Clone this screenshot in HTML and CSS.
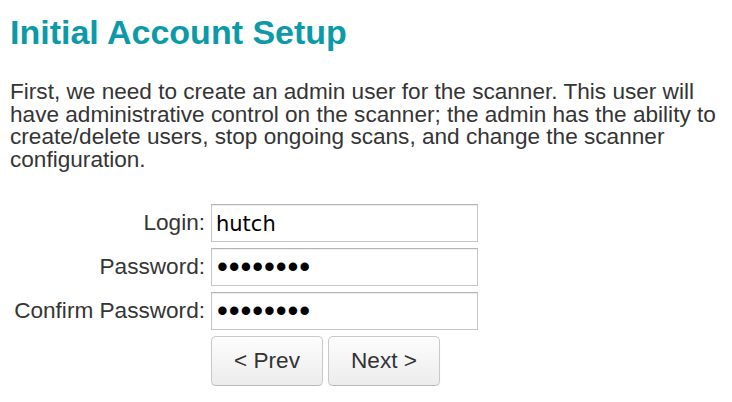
FILE: index.html
```html
<!DOCTYPE html>
<html>
<head>
<meta charset="utf-8">
<title>Initial Account Setup</title>
<link rel="stylesheet" href="styles.css">
</head>
<body>
<div class="page">
  <h1 class="title">Initial Account Setup</h1>
  <p class="intro">First, we need to create an admin user for the scanner. This user will have administrative control on the scanner; the admin has the ability to create/delete users, stop ongoing scans, and change the scanner configuration.</p>
  <form class="form">
    <label class="label" for="login">Login:</label>
    <input class="field" id="login" type="text" value="hutch">
    <label class="label" for="pw">Password:</label>
    <input class="field field-pw" id="pw" type="password" value="abcdefgh">
    <label class="label" for="pw2">Confirm Password:</label>
    <input class="field field-pw" id="pw2" type="password" value="abcdefgh">
    <div class="buttons">
      <button class="btn" type="button">&lt; Prev</button>
      <button class="btn" type="button">Next &gt;</button>
    </div>
  </form>
</div>
</body>
</html>
```

FILE: styles.css
```css
html, body {
  margin: 0;
  padding: 0;
  background: #ffffff;
}

.page {
  padding: 13px 0 0 10px;
  font-family: "Liberation Sans", Arial, Helvetica, sans-serif;
  color: #353535;
}

.title {
  margin: 0;
  font-size: 34px;
  line-height: 39px;
  font-weight: bold;
  color: #0c9aa8;
}

.intro {
  margin: 29px 0 0 0;
  font-size: 22.6px;
  line-height: 22.6px;
  width: 715px;
}

.form {
  margin: 33px 0 0 0;
  display: grid;
  grid-template-columns: 195px 267px;
  column-gap: 6px;
  row-gap: 6px;
  align-items: center;
}

.label {
  justify-self: end;
  font-size: 22.6px;
  line-height: 26px;
  color: #353535;
}

.field {
  box-sizing: border-box;
  height: 38px;
  width: 267px;
  margin: 0;
  padding: 2px 4px 0 4px;
  border: 1px solid #c6c6c6;
  border-top-color: #b4b4b4;
  box-shadow: inset 0 1px 1px rgba(0,0,0,0.08);
  border-radius: 0;
  background: #fff;
  font-family: "DejaVu Sans", Verdana, sans-serif;
  font-size: 21px;
  color: #000;
  outline: none;
}

.field-pw {
  font-family: "Liberation Sans", Arial, sans-serif;
  font-size: 31px;
  letter-spacing: 0.9px;
  padding: 0 4px 0 5px;
}

.buttons {
  grid-column: 2;
  display: flex;
  gap: 5px;
}

.btn {
  box-sizing: border-box;
  width: 112px;
  height: 50px;
  margin: 0;
  border: 1px solid #c9c9c9;
  border-bottom-color: #b8b8b8;
  border-radius: 5px;
  background: linear-gradient(#fdfdfd, #ececec);
  box-shadow: 0 1px 1px rgba(0,0,0,0.08);
  font-family: "Liberation Sans", Arial, Helvetica, sans-serif;
  font-size: 22.6px;
  color: #333;
  padding: 0;
}
```
